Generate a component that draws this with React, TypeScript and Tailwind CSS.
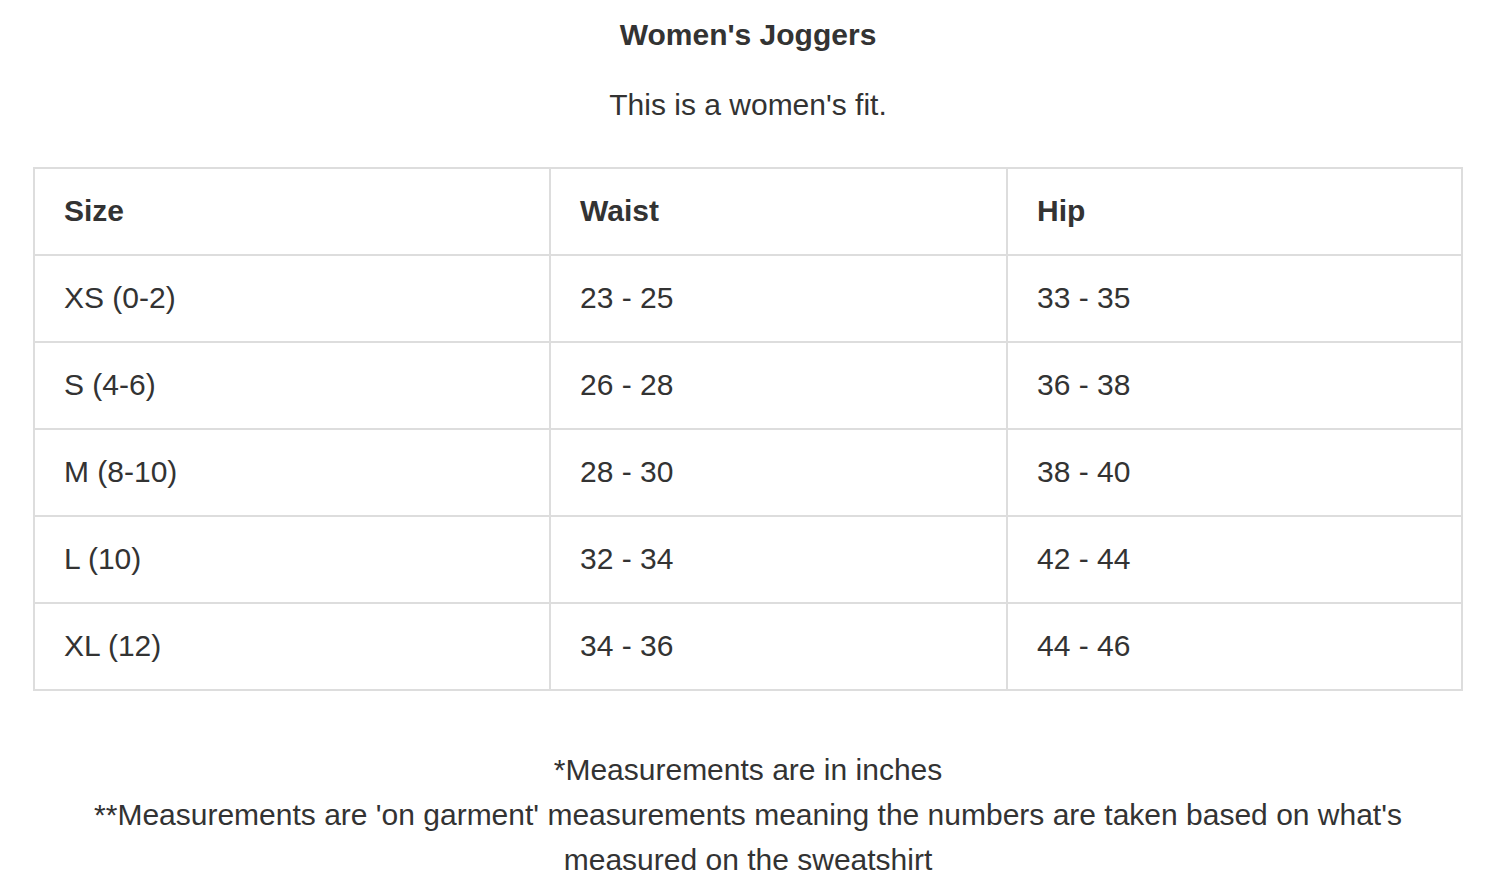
import { Fragment } from "react";

const rows = [
  ["XS (0-2)", "23 - 25", "33 - 35"],
  ["S (4-6)", "26 - 28", "36 - 38"],
  ["M (8-10)", "28 - 30", "38 - 40"],
  ["L (10)", "32 - 34", "42 - 44"],
  ["XL (12)", "34 - 36", "44 - 46"],
];

function Cell({ children, bold }: { children: React.ReactNode; bold?: boolean }) {
  return (
    <div
      className={
        "flex h-[87px] items-center border-r-2 border-b-2 border-[#dddddd] px-[29px] pb-[2px] " +
        (bold ? "font-bold" : "")
      }
    >
      {children}
    </div>
  );
}

export default function App() {
  return (
    <div
      className="min-h-screen bg-white text-[#333333]"
      style={{ fontFamily: '"Liberation Sans", Arial, sans-serif' }}
    >
      <div className="ml-[33px] w-[1430px] pt-[12px] text-[30px] leading-[45px]">
        <h1 className="text-center font-bold">Women's Joggers</h1>
        <p className="mt-[25px] text-center">This is a women's fit.</p>

        <div className="mt-[40px] grid grid-cols-[516px_457px_455px] border-t-2 border-l-2 border-[#dddddd]">
          <Cell bold>Size</Cell>
          <Cell bold>Waist</Cell>
          <Cell bold>Hip</Cell>
          {rows.map((r) => (
            <Fragment key={r[0]}>
              <Cell>{r[0]}</Cell>
              <Cell>{r[1]}</Cell>
              <Cell>{r[2]}</Cell>
            </Fragment>
          ))}
        </div>

        <div className="mt-[56px] text-center">
          <p>*Measurements are in inches</p>
          <p>
            **Measurements are 'on garment' measurements meaning the numbers are taken based on
            what's measured on the sweatshirt
          </p>
        </div>
      </div>
    </div>
  );
}
